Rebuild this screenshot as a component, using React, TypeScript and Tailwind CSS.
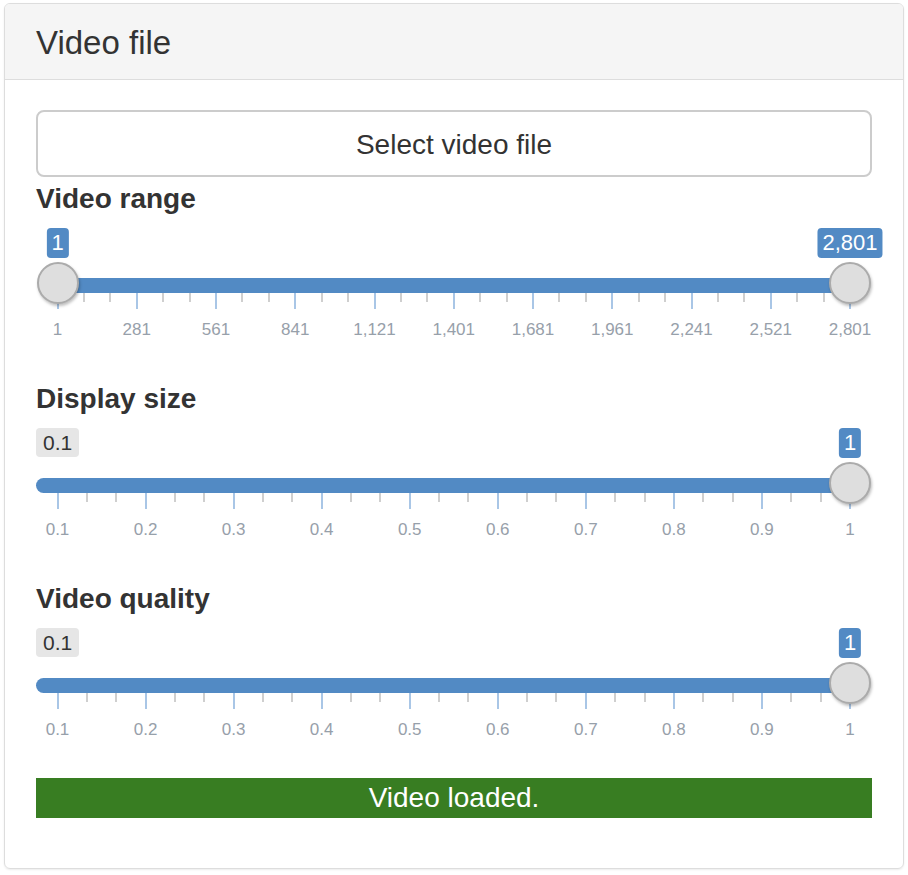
import React from "react";

const FONT = { fontFamily: '"Liberation Sans", Arial, sans-serif' };

type Handle = { x: number; label: string };

function Slider({
  ticks,
  labels,
  handles,
  single,
  minLabel,
}: {
  ticks: number;
  labels: string[];
  handles: Handle[];
  single?: boolean;
  minLabel?: string;
}) {
  const x0 = 21.5;
  const x1 = 814;
  const step = (x1 - x0) / ticks;
  const minor: number[] = [];
  const major: number[] = [];
  for (let i = 0; i <= ticks; i++) {
    major.push(x0 + i * step);
    if (i < ticks) {
      minor.push(x0 + i * step + step / 3);
      minor.push(x0 + i * step + (2 * step) / 3);
    }
  }
  const barLeft = single ? 0 : handles[0].x;
  const barRight = handles[handles.length - 1].x;
  return (
    <div className="relative h-[146px] w-full">
      {minLabel && (
        <div className="absolute left-0 top-[12px] h-[29px] px-[7px] rounded-[4px] bg-[#e6e6e6] text-[#333] text-[21px] leading-[29px]">
          {minLabel}
        </div>
      )}
      <div
        className={`absolute top-[62px] h-[15px] bg-[#528ac4] ${single ? "rounded-l-full" : ""}`}
        style={{ left: barLeft, width: barRight - barLeft }}
      />
      {minor.map((x, i) => (
        <div
          key={"m" + i}
          className="absolute top-[77px] h-[9px] w-[2px] bg-[#cfcfcf]"
          style={{ left: x - 1 }}
        />
      ))}
      {major.map((x, i) => (
        <div
          key={"M" + i}
          className="absolute top-[77px] h-[16px] w-[2px] bg-[#a9c6e6]"
          style={{ left: x - 1 }}
        />
      ))}
      {labels.map((l, i) => (
        <div
          key={"l" + i}
          className="absolute top-[103px] w-[80px] -ml-[40px] text-center text-[17px] leading-[22px] text-[#97a0aa]"
          style={{ left: major[i] }}
        >
          {l}
        </div>
      ))}
      {handles.map((h, i) => (
        <React.Fragment key={"h" + i}>
          <div
            className="absolute top-[12px] -translate-x-1/2 h-[30px] px-[5px] rounded-[4px] bg-[#528ac4] text-white text-[22px] leading-[30px]"
            style={{ left: h.x }}
          >
            {h.label}
          </div>
          <div
            className="absolute top-[46px] h-[42px] w-[42px] rounded-full bg-[#dedede] border-2 border-[#ababab] shadow-[1px_2px_3px_rgba(0,0,0,0.25)]"
            style={{ left: h.x - 21 }}
          />
        </React.Fragment>
      ))}
    </div>
  );
}

export default function App() {
  const rangeLabels = ["1", "281", "561", "841", "1,121", "1,401", "1,681", "1,961", "2,241", "2,521", "2,801"];
  const sizeLabels = ["0.1", "0.2", "0.3", "0.4", "0.5", "0.6", "0.7", "0.8", "0.9", "1"];
  return (
    <div className="w-[908px] h-[875px] bg-white pt-[3px] pl-[4px]" style={FONT}>
      <div className="w-[900px] h-[866px] border border-[#dddddd] rounded-[6px] shadow-[0_1px_2px_rgba(0,0,0,0.08)] overflow-hidden flex flex-col">
        <div className="h-[76px] bg-[#f5f5f5] border-b border-[#dddddd] flex items-center pl-[31px] pt-[2px] text-[33px] text-[#333]">
          Video file
        </div>
        <div className="px-[31px] pt-[30px] flex flex-col text-[#333]">
          <div className="h-[67px] border-2 border-[#cccccc] rounded-[8px] flex items-center justify-center pt-[2px] text-[28px] text-[#333]">
            Select video file
          </div>
          <div className="mt-[5px] h-[34px] leading-[34px] text-[28px] font-bold">Video range</div>
          <Slider ticks={10} labels={rangeLabels} handles={[{ x: 21.5, label: "1" }, { x: 814, label: "2,801" }]} />
          <div className="mt-[20px] h-[34px] leading-[34px] text-[28px] font-bold">Display size</div>
          <Slider ticks={9} labels={sizeLabels} single minLabel="0.1" handles={[{ x: 814, label: "1" }]} />
          <div className="mt-[20px] h-[34px] leading-[34px] text-[28px] font-bold">Video quality</div>
          <Slider ticks={9} labels={sizeLabels} single minLabel="0.1" handles={[{ x: 814, label: "1" }]} />
          <div className="mt-[16px] h-[40px] bg-[#387d22] text-white text-[28px] flex items-center justify-center">
            Video loaded.
          </div>
        </div>
      </div>
    </div>
  );
}
